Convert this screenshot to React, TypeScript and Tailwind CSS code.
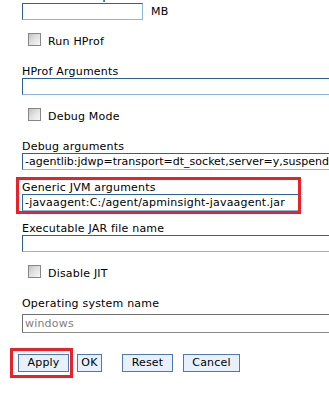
type FieldProps = {
  value?: string
  width?: string
  className?: string
}

function Field({ value = '', width = 'w-[320px]', className = '' }: FieldProps) {
  return (
    <div
      className={`h-[17px] shrink-0 overflow-hidden whitespace-nowrap border border-t-[#2f6299] border-l-[#2f6299] border-b-[#8db6dc] border-r-[#8db6dc] bg-white pl-[2px] leading-[15px] ${width} ${className}`}
    >
      {value}
    </div>
  )
}

function Label({ text }: { text: string }) {
  return <div className="h-[12px] whitespace-nowrap leading-[12px]">{text}</div>
}

function Check({ label, className = '' }: { label: string; className?: string }) {
  return (
    <div className={`ml-[6px] flex h-[15px] items-start ${className}`}>
      <span className="h-[13px] w-[13px] shrink-0 border border-[#868686] bg-gradient-to-br from-[#c4c4c4] via-[#e2e2e2] to-[#f7f7f7]" />
      <span className="ml-[7px] mt-[3px] whitespace-nowrap leading-[12px]">{label}</span>
    </div>
  )
}

function Btn({ text, className = '' }: { text: string; className?: string }) {
  return (
    <button
      type="button"
      className={`h-[18px] shrink-0 border border-[#4d79ab] bg-[#e7f0fc] p-0 text-center text-[11px] leading-[16px] tracking-[0.2px] text-black ${className}`}
    >
      {text}
    </button>
  )
}

export default function App() {
  return (
    <div className="h-[393px] w-[329px] overflow-hidden bg-white font-['DejaVu_Sans',Verdana,sans-serif] text-[11px] tracking-[0.2px] text-black">
      <div className="-mt-[9px] flex flex-col pl-[22px]">
        <Label text="Maximum heap size" />
        <div className="flex items-center">
          <Field width="w-[121px]" />
          <span className="ml-[8px] leading-[12px]">MB</span>
        </div>

        <Check label="Run HProf" className="mt-[13px]" />

        <div className="mt-[18px]">
          <Label text="HProf Arguments" />
        </div>
        <Field />

        <Check label="Debug Mode" className="mt-[13px]" />

        <div className="mt-[18px]">
          <Label text="Debug arguments" />
        </div>
        <Field
          className="tracking-normal"
          value="-agentlib:jdwp=transport=dt_socket,server=y,suspend=n,address=7777"
        />

        <div className="-ml-[6px] mt-[7px] h-[37px] w-[285px] overflow-hidden border-[3px] border-[#e8212b] pl-[3px] pt-[2px]">
          <Label text="Generic JVM arguments" />
          <Field value="-javaagent:C:/agent/apminsight-javaagent.jar" />
        </div>

        <div className="mt-[9px]">
          <Label text="Executable JAR file name" />
        </div>
        <Field />

        <Check label="Disable JIT" className="mt-[13px]" />

        <div className="mt-[18px]">
          <Label text="Operating system name" />
        </div>
        <div className="mt-[4px] h-[19px] w-[320px] overflow-hidden whitespace-nowrap border border-[#707070] border-b-[#8a8a8a] bg-white pl-[2px] leading-[17px] text-[#808080]">
          windows
        </div>

        <div className="mt-[15px] flex items-center">
          <div className="-ml-[12px] flex h-[30px] w-[63px] items-center border-[3px] border-[#e8212b] pl-[5px]">
            <Btn text="Apply" className="w-[51px]" />
          </div>
          <Btn text="OK" className="ml-[4px] w-[25px]" />
          <Btn text="Reset" className="ml-[20px] w-[51px]" />
          <Btn text="Cancel" className="ml-[10px] w-[57px]" />
        </div>
      </div>
    </div>
  )
}
